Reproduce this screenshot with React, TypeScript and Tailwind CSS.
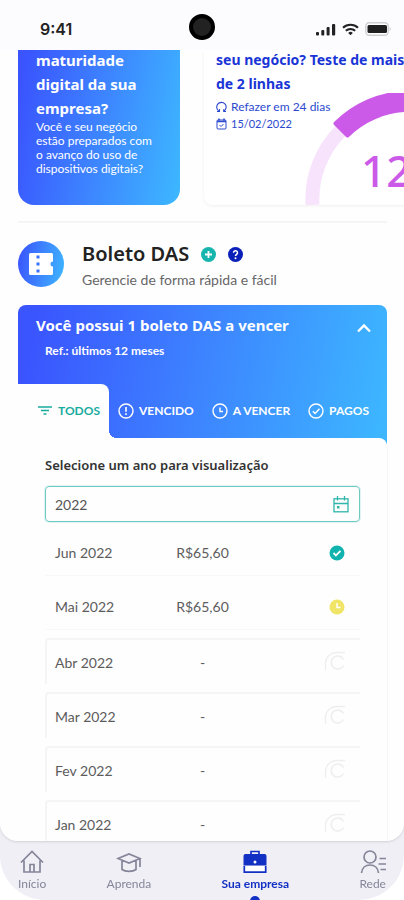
import { ReactNode } from 'react';

const GRADIENT = 'bg-[linear-gradient(100deg,#3a55fe_5%,#3d84ff_50%,#3db5ff_97%)]';

type Status = 'paid' | 'due' | 'empty';

interface Boleto {
    month: string;
    value: string;
    status: Status;
}

const boletos: Boleto[] = [
    { month: 'Jun 2022', value: 'R$65,60', status: 'paid' },
    { month: 'Mai 2022', value: 'R$65,60', status: 'due' },
    { month: 'Abr 2022', value: '-', status: 'empty' },
    { month: 'Mar 2022', value: '-', status: 'empty' },
    { month: 'Fev 2022', value: '-', status: 'empty' },
    { month: 'Jan 2022', value: '-', status: 'empty' },
];

const StatusBar = () => (
    <header className="relative flex h-[50px] shrink-0 items-center justify-between bg-[#fcfbfe] pt-2 pr-3 pl-10">
        <span className="font-['Inter',sans-serif] text-[16px] font-semibold text-[#222]">9:41</span>
        <span className="absolute top-[14px] left-1/2 size-[26px] -translate-x-1/2 rounded-full border-4 border-black bg-[#222]" />
        <div className="flex items-center gap-1.5">
            <svg width="20" height="13" viewBox="0 0 20 13" fill="#222">
                <rect x="0" y="9" width="3" height="3.5" rx="1" />
                <rect x="5.3" y="7" width="3" height="5.5" rx="1" />
                <rect x="10.6" y="4" width="3" height="8.5" rx="1" />
                <rect x="16" y="1" width="3.2" height="11.5" rx="1" />
            </svg>
            <svg width="17" height="13" viewBox="0 0 17 13" fill="none" stroke="#222" strokeWidth="2">
                <path d="M1 4.8a10.8 10.8 0 0 1 15 0" />
                <path d="M3.8 7.8a6.8 6.8 0 0 1 9.4 0" />
                <path d="M8.5 12.3 6.2 9.9a3.3 3.3 0 0 1 4.6 0z" fill="#222" stroke="none" />
            </svg>
            <svg width="27" height="14" viewBox="0 0 27 14">
                <rect x="0.8" y="0.8" width="22.4" height="12.4" rx="3.5" fill="#fff" stroke="#cfcfd2" strokeWidth="1.4" />
                <rect x="2.5" y="3" width="19.5" height="8" rx="1.5" fill="#1f1f1f" />
                <path d="M24.6 5v4c1.6-.6 1.6-3.4 0-4z" fill="#cfcfd2" />
            </svg>
        </div>
    </header>
);

const Gauge = () => (
    <svg className="absolute top-[43px] left-[100px]" width="220" height="112" viewBox="0 0 220 112">
        <path d="M8.5 112a97 97 0 0 1 28-74" fill="none" stroke="#f7e4fc" strokeWidth="14" />
        <path
            d="M31.5 30.5A105 105 0 0 1 180 30.5L168 43A88 88 0 0 0 43.5 42.5Z"
            fill="#cc5ae8"
            stroke="#cc5ae8"
            strokeWidth="4"
            strokeLinejoin="round"
        />
    </svg>
);

const Highlights = () => (
    <section className="flex gap-6 overflow-hidden px-[18px] pb-4">
        <article className={`h-[155px] w-[162px] shrink-0 rounded-b-2xl px-[18px] text-white ${GRADIENT}`}>
            <h2 className="-mt-0.5 font-['Noto_Sans',sans-serif] text-[15px] leading-6 font-bold">
                maturidade<br />digital da sua<br />empresa?
            </h2>
            <p className="text-[12px] leading-[14px] whitespace-nowrap">
                Você e seu negócio<br />estão preparados com<br />o avanço do uso de<br />dispositivos digitais?
            </p>
        </article>
        <article className="relative h-[155px] w-[300px] shrink-0 overflow-hidden rounded-b-lg bg-white px-3 text-[#2c49cf] shadow-[0_1px_3px_rgba(0,0,0,0.06)]">
            <h2 className="-mt-0.5 font-['Noto_Sans',sans-serif] text-[14px] leading-6 font-bold text-[#1a35d6]">
                seu negócio? Teste de mais<br />de 2 linhas
            </h2>
            <p className="mt-0.5 flex items-center gap-1 text-[12px] leading-[17px]">
                <svg width="11" height="12" viewBox="0 0 11 12" fill="none" stroke="currentColor" strokeWidth="1.1">
                    <path d="M3.2 10.2A4.7 4.7 0 1 1 8 10" />
                    <path d="M1 10.5h2.5V8M10 10.5H7.7V8.2" />
                </svg>
                Refazer em 24 dias
            </p>
            <p className="flex items-center gap-1 text-[11px] leading-[17px]">
                <svg width="11" height="12" viewBox="0 0 11 12" fill="none" stroke="currentColor">
                    <rect x="1" y="2" width="9" height="9" rx="1" />
                    <path d="M1 3.5h9M3 .5v2M8 .5v2" strokeWidth="1.5" />
                    <path d="m3.5 7 1.5 1.5L7.5 6" />
                </svg>
                15/02/2022
            </p>
            <Gauge />
            <strong className="absolute top-[95px] left-[157px] font-['Noto_Sans',sans-serif] text-[44px] leading-[50px] font-medium text-[#cc5ae8]">
                12
            </strong>
        </article>
    </section>
);

const SectionTitle = () => (
    <div className="flex items-center gap-[18px] py-[15px]">
        <span className={`flex size-[46px] shrink-0 items-center justify-center rounded-full ${GRADIENT}`}>
            <svg width="24" height="22" viewBox="0 0 24 22">
                <path
                    d="M1.5 0H22.5A1.5 1.5 0 0 1 24 1.5V8.5a2.5 2.5 0 0 0 0 5v7a1.500 1.500 0 0 1-1.500 1.500H1.500A1.500 1.500 0 0 1 0 20.500v-19A1.500 1.500 0 0 1 1.500 0z"
                    fill="#fff"
                />
                <path d="M7.500 2.500h3v3h-3zM7.500 9.500h3v3h-3zM7.500 16.500h3v3h-3z" fill="#3a70ff" />
            </svg>
        </span>
        <div>
            <div className="flex items-center gap-3">
                <h1 className="font-['Noto_Sans',sans-serif] text-[20px] leading-8 font-semibold text-[#222]">Boleto DAS</h1>
                <button aria-label="Adicionar">
                    <svg width="15" height="15" viewBox="0 0 15 15">
                        <circle cx="7.5" cy="7.5" r="7.5" fill="#17b5ad" />
                        <path d="M7.5 4v7M4 7.5h7" stroke="#fff" strokeWidth="1.8" />
                    </svg>
                </button>
                <button aria-label="Ajuda">
                    <svg width="15" height="15" viewBox="0 0 15 15" fill="none">
                        <circle cx="7.5" cy="7.5" r="7.5" fill="#0b20b8" />
                        <path d="M5.5 5.8a2 2 0 1 1 3 1.7c-.7.4-1 .7-1 1.5" stroke="#fff" strokeWidth="1.5" />
                        <circle cx="7.5" cy="11.2" r="1" fill="#fff" />
                    </svg>
                </button>
            </div>
            <p className="text-[14px] leading-5 text-[#666]">Gerencie de forma rápida e fácil</p>
        </div>
    </div>
);

const TabIcon = ({ children }: { children: ReactNode }) => (
    <svg width="16" height="16" viewBox="0 0 16 16" fill="none" stroke="currentColor" strokeWidth="1.4">
        <circle cx="8" cy="8" r="7" />
        {children}
    </svg>
);

const Tabs = () => (
    <div role="tablist" className="flex h-[54px] items-stretch text-[12px] font-bold text-white">
        <button
            role="tab"
            aria-selected="true"
            className="relative flex w-[91px] shrink-0 items-center gap-1.5 rounded-tr-lg bg-[#fefefe] pl-5 text-[#17ab9f] after:absolute after:bottom-0 after:left-full after:size-2 after:bg-[radial-gradient(circle_at_top_right,transparent_8px,#fefefe_8px)]"
        >
            <svg width="14" height="10" viewBox="0 0 14 10" stroke="currentColor" strokeWidth="1.5">
                <path d="M0 1h14M3 4.5h8M5.5 8h3" />
            </svg>
            TODOS
        </button>
        <div className="flex flex-1 items-center justify-between pr-[18px] pl-[9px]">
            <button role="tab" className="flex items-center gap-[5px]">
                <TabIcon>
                    <path d="M8 4v4.8M8 10.2v1.8" strokeWidth="1.6" />
                </TabIcon>
                VENCIDO
            </button>
            <button role="tab" className="flex items-center gap-[5px]">
                <TabIcon>
                    <path d="M8 4.5V8.5h3" />
                </TabIcon>
                A VENCER
            </button>
            <button role="tab" className="flex items-center gap-[5px]">
                <TabIcon>
                    <path d="m4.8 8.2 2.3 2.3 4.4-4.7" />
                </TabIcon>
                PAGOS
            </button>
        </div>
    </div>
);

const StatusIcon = ({ status }: { status: Status }) => {
    if (status === 'empty') {
        return (
            <svg className="ml-auto" width="24" height="24" viewBox="0 0 24 24" fill="none" stroke="#eeeeee" strokeWidth="1.3">
                <path d="M21 2.5H13A11 11 0 0 0 1.500 13v7" />
                <path d="M19.500 9.5a6.500 6.500 0 1 0 0 6" strokeWidth="1.6" />
            </svg>
        );
    }
    return (
        <svg className="ml-auto" width="24" height="16" viewBox="-5 0 24 16" fill="none" stroke="#fff" strokeWidth="1.8">
            <circle cx="8" cy="8" r="7.5" fill={status === 'paid' ? '#11b3ae' : '#f0e566'} stroke="none" />
            {status === 'paid' ? <path d="m4.5 8 2.4 2.4 4.6-4.6" /> : <path d="M8 4v4.5h3.5" strokeWidth="1.4" />}
        </svg>
    );
};

const BoletoTable = () => (
    <table className="w-full table-fixed border-separate border-spacing-x-0 border-spacing-y-2 text-[14px] text-[#5c5c5c]">
        <tbody>
            {boletos.map(({ month, value, status }) => {
                const empty = status === 'empty';
                const line = empty ? 'border-t-2 border-[#f5f5f5]' : 'border-b border-[#f7f7f7]';
                return (
                    <tr key={month} className="h-[46px]">
                        <td className={`pl-2 ${line} ${empty ? 'rounded-tl border-l-2' : 'border-l-2 border-l-transparent'}`}>{month}</td>
                        <td className={`text-center ${line}`}>{value}</td>
                        <td className={`pr-3 ${line}`}>
                            <StatusIcon status={status} />
                        </td>
                    </tr>
                );
            })}
        </tbody>
    </table>
);

const BoletoCard = () => (
    <section>
        <div className={`rounded-t-lg pb-2 ${GRADIENT}`}>
            <div className="flex h-[79px] items-start justify-between pt-2 pr-[15px] pl-[18px] text-white">
                <div>
                    <h2 className="font-['Noto_Sans',sans-serif] text-[15px] leading-6 font-bold">Você possui 1 boleto DAS a vencer</h2>
                    <p className="mt-1 pl-[9px] text-[12px] leading-5 font-bold">Ref.: últimos 12 meses</p>
                </div>
                <button aria-label="Recolher" className="pt-2.5">
                    <svg width="16" height="10" viewBox="0 0 16 10" fill="none" stroke="currentColor" strokeWidth="2.4">
                        <path d="m2 8.5 6-6 6 6" />
                    </svg>
                </button>
            </div>
            <Tabs />
        </div>
        <div className="relative -mt-2 rounded-tr-lg bg-[#fefefe] px-[27px] pt-[17px] shadow-[1px_3px_1px_#f5f5f8]">
            <label htmlFor="year" className="block font-['Noto_Sans',sans-serif] text-[13px] leading-5 font-semibold text-[#333]">
                Selecione um ano para visualização
            </label>
            <div className="mt-[11px] flex h-9 items-center rounded border border-[#6ccac2] pr-[10px] pl-[9px] ring-1 ring-[#6ccac2]/20">
                <input id="year" defaultValue="2022" className="min-w-0 flex-1 text-[14px] text-[#555] outline-none" />
                <svg width="16" height="17" viewBox="0 0 16 17" fill="none" stroke="#2fb5aa" strokeWidth="1.3">
                    <rect x="1" y="2.8" width="14" height="13" />
                    <path d="M4.5 0v4.5M11.5 0v4.5M1 7.5h14" />
                    <rect x="4" y="10" width="2.5" height="2.5" fill="#2fb5aa" stroke="none" />
                </svg>
            </div>
            <BoletoTable />
        </div>
    </section>
);

const NavItem = ({ label, active, children }: { label: string; active?: boolean; children: ReactNode }) => (
    <a
        href="#"
        aria-current={active ? 'page' : undefined}
        className={`relative flex flex-col items-center text-[12px] leading-[18px] ${active ? 'mx-2.5 font-bold text-[#1230c4]' : 'text-[#85859a]'}`}
    >
        <svg width="26" height="26" viewBox="0 0 26 26" fill="none" stroke="currentColor" strokeWidth="1.7">
            {children}
        </svg>
        {label}
        {active && <span className="absolute top-[47px] size-2.5 rounded-full bg-[#1230c4]" />}
    </a>
);

const BottomNav = () => (
    <nav className="flex h-[59px] shrink-0 items-start justify-between overflow-hidden px-[18px] pt-2">
        <NavItem label="Início">
            <path d="M2 13.5 13 2.5l11 11M5 11.5V23h16V11.5M11 23v-7.5h4V23" />
        </NavItem>
        <NavItem label="Aprenda">
            <path d="M2 9.5 13 5l11 4.5L13 14zM6 11v9.5c3 2.5 11 2.5 14 0V11M24 9v9" />
        </NavItem>
        <NavItem label="Sua empresa" active>
            <path d="M9 6V2.5h8V6" />
            <path d="M3.5 5h19a2 2 0 0 1 2 2v9.5h-23V7a2 2 0 0 1 2-2z" fill="currentColor" stroke="none" />
            <path d="M2.3 17v6.2h21.400V17" fill="#fff" />
            <circle cx="13" cy="13" r="1.5" fill="#fff" stroke="none" />
        </NavItem>
        <NavItem label="Rede">
            <circle cx="10" cy="8" r="6" />
            <path d="M1.5 24c.5-5 4-8 8.5-8s8 3 8.5 8M19.5 9.5H26M18.5 15H26M20.5 20.5H26" />
        </NavItem>
    </nav>
);

const App = () => (
    <div className="flex h-screen flex-col overflow-hidden rounded-b-[45px] bg-[#f0eff5] font-['Lato',sans-serif]">
        <StatusBar />
        <main className="min-h-0 flex-1 overflow-y-auto rounded-b-[18px] bg-[#fefefe] shadow-sm [scrollbar-width:none]">
            <Highlights />
            <div className="pr-[17px] pl-[18px]">
                <hr className="border-t-2 border-[#f5f5f6]" />
                <SectionTitle />
                <BoletoCard />
            </div>
        </main>
        <BottomNav />
    </div>
);

export default App;
